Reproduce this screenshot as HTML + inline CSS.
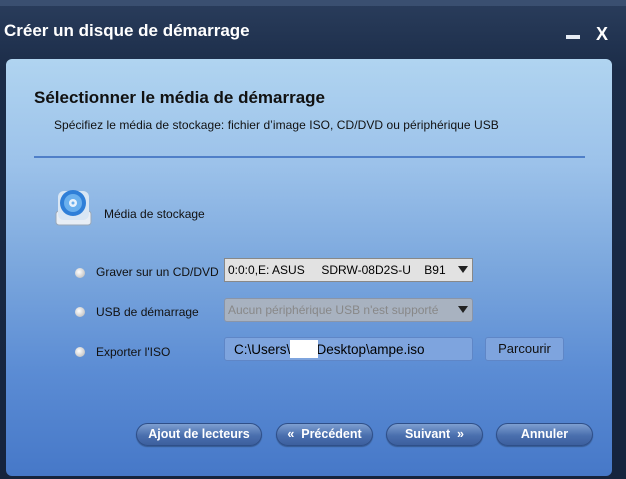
<!DOCTYPE html>
<html><head><meta charset="utf-8"><style>
*{margin:0;padding:0;box-sizing:border-box}
body{width:626px;height:479px;overflow:hidden;background:linear-gradient(180deg,#2a3d5c 0%,#1b2c48 15%,#15243d 100%);font-family:"Liberation Sans",sans-serif;position:relative}
.top{position:absolute;left:0;top:0;width:626px;height:6px;background:#3a4f70}
.title{position:absolute;left:4px;top:21px;color:#fff;font-size:17px;font-weight:bold;letter-spacing:0px}
.min{position:absolute;left:566px;top:35px;width:14px;height:4px;background:#e6ecf4}
.x{position:absolute;left:596px;top:24px;color:#fff;font-size:18px;font-weight:bold}
.panel{position:absolute;left:6px;top:59px;width:606px;height:417px;border-radius:6px;background:linear-gradient(180deg,#b0d4f0 0%,#9cc2ea 25%,#7ba7dd 50%,#5b8cd4 75%,#4678c8 100%)}
.h{position:absolute;left:34px;top:88px;font-size:17px;font-weight:bold;color:#111;letter-spacing:0px}
.sub{position:absolute;left:54px;top:118px;font-size:12px;color:#111;letter-spacing:0.05px}
.line{position:absolute;left:34px;top:156px;width:551px;height:2px;background:#4f7fc8}
.t{position:absolute;font-size:12px;color:#111}
.radio{position:absolute;width:10px;height:10px;border-radius:50%;background:radial-gradient(circle at 40% 40%,#fff,#c8c8c8 70%,#999);}
.sel{position:absolute;left:224px;width:249px;height:24px;border:1px solid #888;font-size:12px;padding:4px 3px;white-space:pre}
.arr{position:absolute;right:4px;top:7px;width:0;height:0;border-left:5px solid transparent;border-right:5px solid transparent;border-top:7px solid #222}
.btn{position:absolute;top:423px;height:23px;border-radius:12px;background:linear-gradient(180deg,#7e9fd0,#4a6fae 55%,#3c5f9e);border:1px solid #2f4f88;color:#fff;font-size:12.5px;font-weight:bold;text-align:center;line-height:21px;box-shadow:0 1px 1px rgba(0,0,0,.3)}
</style></head><body>
<div class="top"></div>
<div class="title">Créer un disque de démarrage</div>
<div class="min"></div><div class="x">X</div>
<div class="panel"></div>
<div class="h">Sélectionner le média de démarrage</div>
<div class="sub">Spécifiez le média de stockage: fichier d’image ISO, CD/DVD ou périphérique USB</div>
<div class="line"></div>
<svg style="position:absolute;left:55px;top:189px" width="38" height="38" viewBox="0 0 38 38">
<rect x="1" y="22" width="35" height="14" rx="3" fill="#e8eef5" stroke="#9aa8b8"/>
<rect x="3" y="2" width="31" height="29" rx="6" fill="#d8e6f4"/>
<circle cx="18" cy="14" r="13" fill="#2f7fd8"/><circle cx="18" cy="14" r="9" fill="#6ab0ee"/><circle cx="18" cy="14" r="4" fill="#e8f2fc"/><circle cx="18" cy="14" r="1.5" fill="#6ab0ee"/>
</svg>
<div class="t" style="left:104px;top:207px;font-size:12px">Média de stockage</div>
<div class="radio" style="left:75px;top:268px"></div>
<div class="t" style="left:96px;top:265px">Graver sur un CD/DVD</div>
<div class="sel" style="top:258px;background:#e2e2e2;font-size:12px">0:0:0,E: ASUS     SDRW-08D2S-U    B91<div class="arr"></div></div>
<div class="radio" style="left:75px;top:307px"></div>
<div class="t" style="left:96px;top:305px">USB de démarrage</div>
<div class="sel" style="top:298px;background:#a8b2c0;color:#888;border-color:#8a95a8;border-radius:3px">Aucun périphérique USB n'est supporté<div class="arr"></div></div>
<div class="radio" style="left:75px;top:347px"></div>
<div class="t" style="left:96px;top:345px">Exporter l'ISO</div>
<div class="sel" style="top:337px;background:#7ea4de;border-color:#5f86c6;border-radius:3px;padding-left:9px;font-size:13.5px">C:\Users\       Desktop\ampe.iso</div>
<div style="position:absolute;left:290px;top:340px;width:28px;height:18px;background:#fff"></div>
<div style="position:absolute;left:485px;top:337px;width:79px;height:24px;border:1px solid #5f86c6;border-radius:3px;background:#7ea4de;font-size:13px;text-align:center;line-height:22px;color:#111">Parcourir</div>
<div class="btn" style="left:136px;width:126px">Ajout de lecteurs</div>
<div class="btn" style="left:276px;width:97px">«&nbsp; Précédent</div>
<div class="btn" style="left:386px;width:97px">Suivant &nbsp;»</div>
<div class="btn" style="left:496px;width:97px">Annuler</div>
</body></html>
